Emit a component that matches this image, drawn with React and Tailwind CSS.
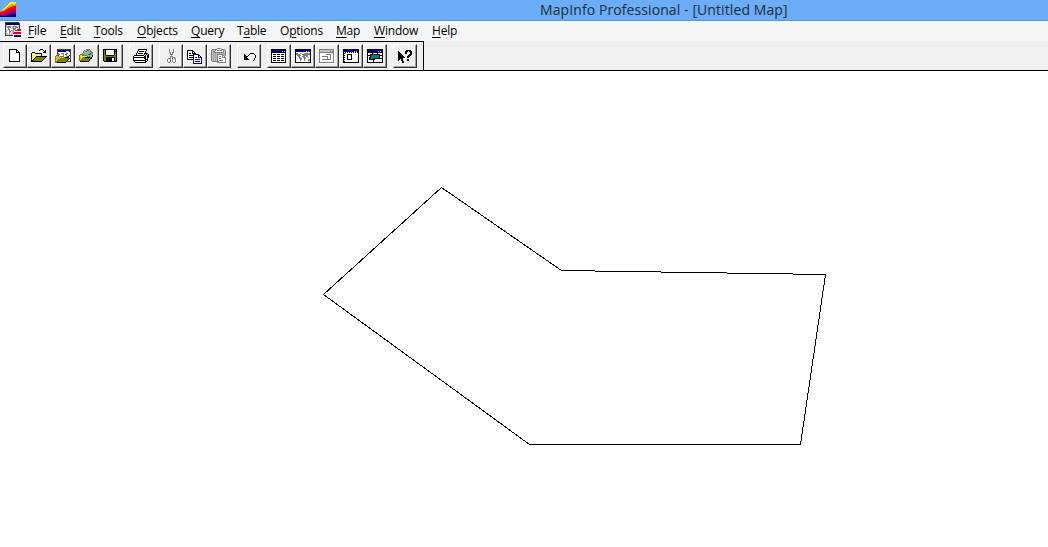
import React from "react";

const PALETTE = {
  k: "#000000", w: "#ffffff", o: "#808000", y: "#ffff00", g: "#808080", s: "#c0c0c0",
  b: "#000080", t: "#008080", r: "#ff0000", h: "#a0a0a0", n: "#ff8000", m: "#c00060",
  p: "#800080", c: "#60b8d8", d: "#404040", e: "#c8c878", f: "#e0a060",
};

const ICONS = {
  app: [
    "..........yyyyyy",
    ".........yyyyyny",
    "........yyynnyyn",
    ".......yynynnnnn",
    "......yynynnnrrr",
    ".....yynnnrrrrrr",
    "....yynnrrrrrrrr",
    "...yynrrrrrrrmrm",
    "..ynnrrrrrmmmmmm",
    "nnrrrrrrmmmmmmpp",
    "rrrrrmmmmmmppppp",
    "rrmmmmmmpppppppp",
    "mmmmmppppppbbbbb",
    "ppppppbbbbbbbbbb",
    "bbbbbbbbbbbbbbbb",
  ],
  mapdoc: [
    "dddddddddddddd..",
    "dbbbbbbbbbbbbbd.",
    "dbbbbbbbbbbbbbd.",
    "dswwwswwwswwwsd.",
    "dssggsssggggssd.",
    "dsggggwsgwgggsd.",
    "dwwgwwssgggwwsd.",
    "dswggwwwggswrrrr",
    "dsswgwssgwrrrrrr",
    "dswwggwsgwwwwwww",
    "dswwgswsgrmrmrmr",
    "dsswgwssmrmrmrmr",
    "dssssssswwwwwwww",
    "dddddddd.bpbpbpb",
    ".........bbbbbbb",
  ],
  blank: [
    "................",
    "..kkkkkkkk......",
    "..kwwwwwwkk.....",
    "..kwwwwwwkwk....",
    "..kwwwwwwkkkk...",
    "..kwwwwwwwwwk...",
    "..kwwwwwwwwwk...",
    "..kwwwwwwwwwk...",
    "..kwwwwwwwwwk...",
    "..kwwwwwwwwwk...",
    "..kwwwwwwwwwk...",
    "..kwwwwwwwwwk...",
    "..kwwwwwwwwwk...",
    "..kkkkkkkkkkk...",
  ],
  open: [
    "................",
    ".........kkk....",
    "........k...k.k.",
    ".............kk.",
    ".kkk........kkk.",
    "kywykkkkkkk.....",
    "kwywywywywk.....",
    "kywywywywyk.....",
    "kwywykkkkkkkkkkk",
    "kywykoooooooook.",
    "kwykoooooooook..",
    "kykoooooooook...",
    "kkoooooooook....",
    "kkkkkkkkkkk.....",
  ],
  openMap: [
    "................",
    "..dddddddddddddd",
    "..dbbbbbbbbbbbbd",
    "..dbbbbbbbbswsbd",
    "..dwwwwwwwwwwwwd",
    "..dgwwgggwwggwwd",
    "..dggwwwgwggwwwd",
    ".oodwwwwgwwgwwkd",
    "ofeoeoooowwggkwd",
    "oefefefefokkkkwd",
    "ofeffoooooooookd",
    "oefooooooooookwd",
    "oeooooooooookwwd",
    "oooooooooookdddd",
    "ookkkkkkkkk.....",
  ],
  openGlobe: [
    "................",
    ".......gggg.....",
    ".....gccttfg....",
    "....gcctffcog...",
    "....gcffffccog..",
    "...gccfffcctog..",
    ".ooogcccftttcg..",
    "oeeooooocccffk..",
    "oeyeyeyeoctffk..",
    "oeyeookkkkktk...",
    "oeeooooooookk...",
    "oeooooooookg....",
    "ooooooooook.....",
    ".kkkkkkkkk......",
  ],
  save: [
    "................",
    "kkkkkkkkkkkkkk..",
    "kokwwwwwwwwkok..",
    "kokwwwwwwwwkkk..",
    "kokwwwwwwwwkok..",
    "kokwwwwwwwwkok..",
    "kokwwwwwwwwkok..",
    "kookkkkkkkkook..",
    "kooooooooooook..",
    "kookkkkkkkkkok..",
    "kookkkkkkwwkok..",
    "kookkkkkkwwkok..",
    "kookkkkkkwwkok..",
    ".kkkkkkkkkkkkk..",
  ],
  print: [
    "................",
    ".....kkkkkkkkk..",
    ".....kwwwwwwwk..",
    "....kwkkkkkwk...",
    "....kwwwwwwwk...",
    "...kwkkkkkwkkkk.",
    "...kwwwwwwwkwkwk",
    ".kkkkkkkkkkwkwkk",
    "kwwwwwwwwwwkkwkk",
    "kkkkkkkkkkkkkwkk",
    "kwwwwwwyyywkkwk.",
    "kwwwwwwwwwwwkkk.",
    "kkkkkkkkkkkkkwk.",
    ".kwwwwwwwwwwkk..",
    "..kkkkkkkkkkk...",
  ],
  cut: [
    "................",
    "......gw..gw....",
    "......gw..gw....",
    "......gw..gw....",
    "......ggwggw....",
    ".......gwgw.....",
    ".......gggw.....",
    "........gw......",
    ".......gggw.....",
    ".......gwggg....",
    ".....gggwgwgg...",
    "....gwwgwgwwgw..",
    "....gw.gwgwwgw..",
    "....gw.gwgwwgw..",
    ".....ggw..ggw...",
  ],
  copy: [
    "................",
    "................",
    "kkkkkk..........",
    "kwwwwkk.........",
    "kwwwwkwk........",
    "kwkkwkkkk.......",
    "kwwwwwbbbbbb....",
    "kwkkkkbwwwwbb...",
    "kwwwwwbwwwwbwb..",
    "kwkkkkbwbbwbbbb.",
    "kwwwwwbwwwwwwwb.",
    "kkkkkkbwbbbbbwb.",
    "......bwwwwwwwb.",
    "......bwbbbbbwb.",
    "......bwwwwwwwb.",
    "......bbbbbbbbb.",
  ],
  paste: [
    "......gggg......",
    ".gggggwwwwgggg..",
    "gshsgwgggggwhsgw",
    "gshgwwwwwwwwgsgw",
    "gshggggggggggsgw",
    "gshshshshshshsgw",
    "gshshsggggggshgw",
    "gshshsgwwwwggsgw",
    "gshshsgwggwgwgww",
    "gshshsgwwwwggggw",
    "gshshsgwggwwwwgw",
    "gshshsgwwwwwwwgw",
    "gshshsgwggggwwgw",
    ".gggggggwwwwwwgw",
    ".wwwwwggggggggg.",
  ],
  undo: [
    "................",
    "................",
    "................",
    "................",
    "................",
    ".........kkkk...",
    "...k....k....k..",
    "...kk..k......k.",
    "...kkkk.......k.",
    "...kkk........k.",
    "...kkkk......k..",
    "...kkkkk.....k..",
    "............k...",
  ],
  browse: [
    "................",
    "kkkkkkkkkkkkkkk.",
    "kbbbbbbbbbbbbbk.",
    "kbbbbbbbbbbsbsk.",
    "kkkkkkkkkkkkkkk.",
    "kwwwwwwwwwwwwwk.",
    "kwkkkwkkkwkkkwk.",
    "kwwwwwwwwwwwwwk.",
    "kwkkkwkkkwkkkwk.",
    "kwwwwwwwwwwwwwk.",
    "kwkkkwkkkwkkkwk.",
    "kwwwwwwwwwwwwwk.",
    "kwkkkwkkkwkkkwk.",
    "kwwwwwwwwwwwwwk.",
    "kkkkkkkkkkkkkkk.",
  ],
  map: [
    "................",
    "kkkkkkkkkkkkkkkk",
    "kbbbbbbbbbbbbbbk",
    "kbbbbbbbbbbsbsbk",
    "kwwwwwwwwwwwwwwk",
    "kggwwgwwwggggggk",
    "kggggwwggggggggk",
    "kwggggwwgggggwwk",
    "kwwggwwgggwggwwk",
    "kwwwggwwgggwwgwk",
    "kwwwgggwwggwwwwk",
    "kwwwwggwwgwwwggk",
    "kwwwwgwwwgwwwggk",
    "kwwwwwwwwwwwwwwk",
    "kkkkkkkkkkkkkkkk",
  ],
  graph: [
    "................",
    "gggggggggggggggw",
    "gsssssssssssssgw",
    "gssssssssssgsggw",
    "gggggggggggggggw",
    "gwwwwwwwwwwwwwgw",
    "gwwwwwwgggggwwgw",
    "gwwwwwwwwwwgwwgw",
    "gwwggggggwwgwwgw",
    "gwwwwwwwgwwgwwgw",
    "gwwwwwwwgwwgwwgw",
    "gwwgggggggggwwgw",
    "gwwwwwwwwwwwwwgw",
    "gwwwwwwwwwwwwwgw",
    "gggggggggggggggw",
    "wwwwwwwwwwwwwwww",
  ],
  layout: [
    "................",
    "kkkkkkkkkkkkkkkk",
    "kbbbbbbbbbbbbbbk",
    "kbbbbbbbbbbsbsbk",
    "kwkwkwkwkwkwkwkk",
    "kkwwwwwwwwwwwwwk",
    "kwwwkkkkkwwwwwwk",
    "kkwwkwwwkwwwwwwk",
    "kwwwkwwwkwwwwwwk",
    "kkwwkwwwkwwwwwwk",
    "kwwwkwwwkwwwwwwk",
    "kkwwkkkkkwwwwwwk",
    "kwwwwwwwwwwwwwwk",
    "kkwwwwwwwwwwwwwk",
    "kkkkkkkkkkkkkkkk",
  ],
  district: [
    "................",
    "kkkkkkkkkkkkkkkk",
    "kbbbbbbbbbbbbbbk",
    "kbbbbbbbbbbsbsbk",
    "kkkkkkkkkkkkkkkk",
    "kwwwwkwwwwkwwwwk",
    "kwwkkkkkkkkkkwwk",
    "kkkkttttttttkkkk",
    "kwwkttttttttkwwk",
    "kwkkttttttttkwwk",
    "kwkttttkkkkkkkkk",
    "kwkkkkkkwwwwwwwk",
    "kwwwwwkwwwwwwwwk",
    "kwwwwwkwwwwwwwwk",
    "kkkkkkkkkkkkkkkk",
  ],
  help: [
    "................",
    "................",
    ".........kkkkk..",
    ".k......kkk.kkk.",
    ".kk.....kk...kk.",
    ".kkk....kk...kk.",
    ".kkkk.......kkk.",
    ".kkkkk.....kkk..",
    ".kkkkkk...kkk...",
    ".kkkkkkk..kk....",
    ".kkkkk..........",
    ".kk.kk....kk....",
    ".k..kk....kk....",
    ".....kk.........",
    ".....kk.........",
  ],
};

function PixelIcon({ name }) {
  const cells = [];
  ICONS[name].forEach((row, y) => {
    let x = 0;
    while (x < row.length) {
      let end = x + 1;
      while (end < row.length && row[end] === row[x]) end++;
      if (row[x] !== ".") {
        cells.push(<rect key={`${x}-${y}`} x={x} y={y} width={end - x} height="1" fill={PALETTE[row[x]]} />);
      }
      x = end;
    }
  });
  return (
    <svg width="16" height="16" viewBox="0 0 16 16" shapeRendering="crispEdges" className="block shrink-0" aria-hidden="true">
      {cells}
    </svg>
  );
}

const MENUS = [
  ["", "F", "ile", "w-8"],
  ["", "E", "dit", "w-[34px]"],
  ["", "T", "ools", "w-[43px]"],
  ["", "O", "bjects", "w-[54px]"],
  ["", "Q", "uery", "w-[46px]"],
  ["T", "a", "ble", "w-[43px]"],
  ["O", "p", "tions", "w-14"],
  ["", "M", "ap", "w-[38px]"],
  ["", "W", "indow", "w-[58px]"],
  ["", "H", "elp", "w-10"],
];

const TOOL_GROUPS = [
  ["blank", "open", "openMap", "openGlobe", "save"],
  ["print"],
  ["cut", "copy", "paste"],
  ["undo"],
  ["browse", "map", "graph", "layout", "district"],
  ["help"],
];

function ToolButton({ name }) {
  return (
    <button
      aria-label={name}
      className="flex h-6 w-6 items-start justify-start border border-t-white border-l-white border-r-[#303030] border-b-[#303030] bg-[#f0f0f0] pt-[3px] pl-[3px] shadow-[inset_-1px_-1px_0_#a0a0a0]"
    >
      <PixelIcon name={name} />
    </button>
  );
}

export default function App() {
  return (
    <div className="flex h-[547px] w-[1048px] flex-col overflow-hidden bg-white font-['Open_Sans','Noto_Sans',sans-serif] text-black">
      <header className="flex h-[21px] shrink-0 border-b border-[#5596dc] bg-[#6badf6]">
        <div className="w-[540px] pt-0.5">
          <PixelIcon name="app" />
        </div>
        <h1 className="whitespace-nowrap text-[14px] leading-5 tracking-[0.09px] text-[#202c3c]">MapInfo Professional - [Untitled Map]</h1>
      </header>
      <nav className="flex h-5 shrink-0 bg-[#f5f6f7] pl-[5px]">
        <div className="w-[23px] pt-px">
          <PixelIcon name="mapdoc" />
        </div>
        {MENUS.map(([before, key, after, width]) => (
          <div key={before + key + after} className={`${width} shrink-0 whitespace-nowrap text-[12px] leading-5 tracking-[-0.2px]`}>
            {before}
            <span className="underline decoration-1 underline-offset-2">{key}</span>
            {after}
          </div>
        ))}
      </nav>
      <div className="h-[30px] shrink-0 border-b border-black bg-[#f0f0f0]">
        <div className="flex h-[29px] w-[424px] gap-1.5 border-t border-r border-black pl-[3px] pt-0.5">
          {TOOL_GROUPS.map((group) => (
            <div key={group[0]} className="flex">
              {group.map((name) => (
                <ToolButton key={name} name={name} />
              ))}
            </div>
          ))}
        </div>
      </div>
      <main className="flex-1 bg-white">
        <svg width="1048" height="476" viewBox="0 71 1048 476" className="block" shapeRendering="crispEdges">
          <polygon points="441.5,187.5 561.5,270.5 825.5,274.5 800.5,444.5 529.5,444.5 323.5,294.5" fill="none" stroke="#000" strokeWidth="1" />
        </svg>
      </main>
    </div>
  );
}
